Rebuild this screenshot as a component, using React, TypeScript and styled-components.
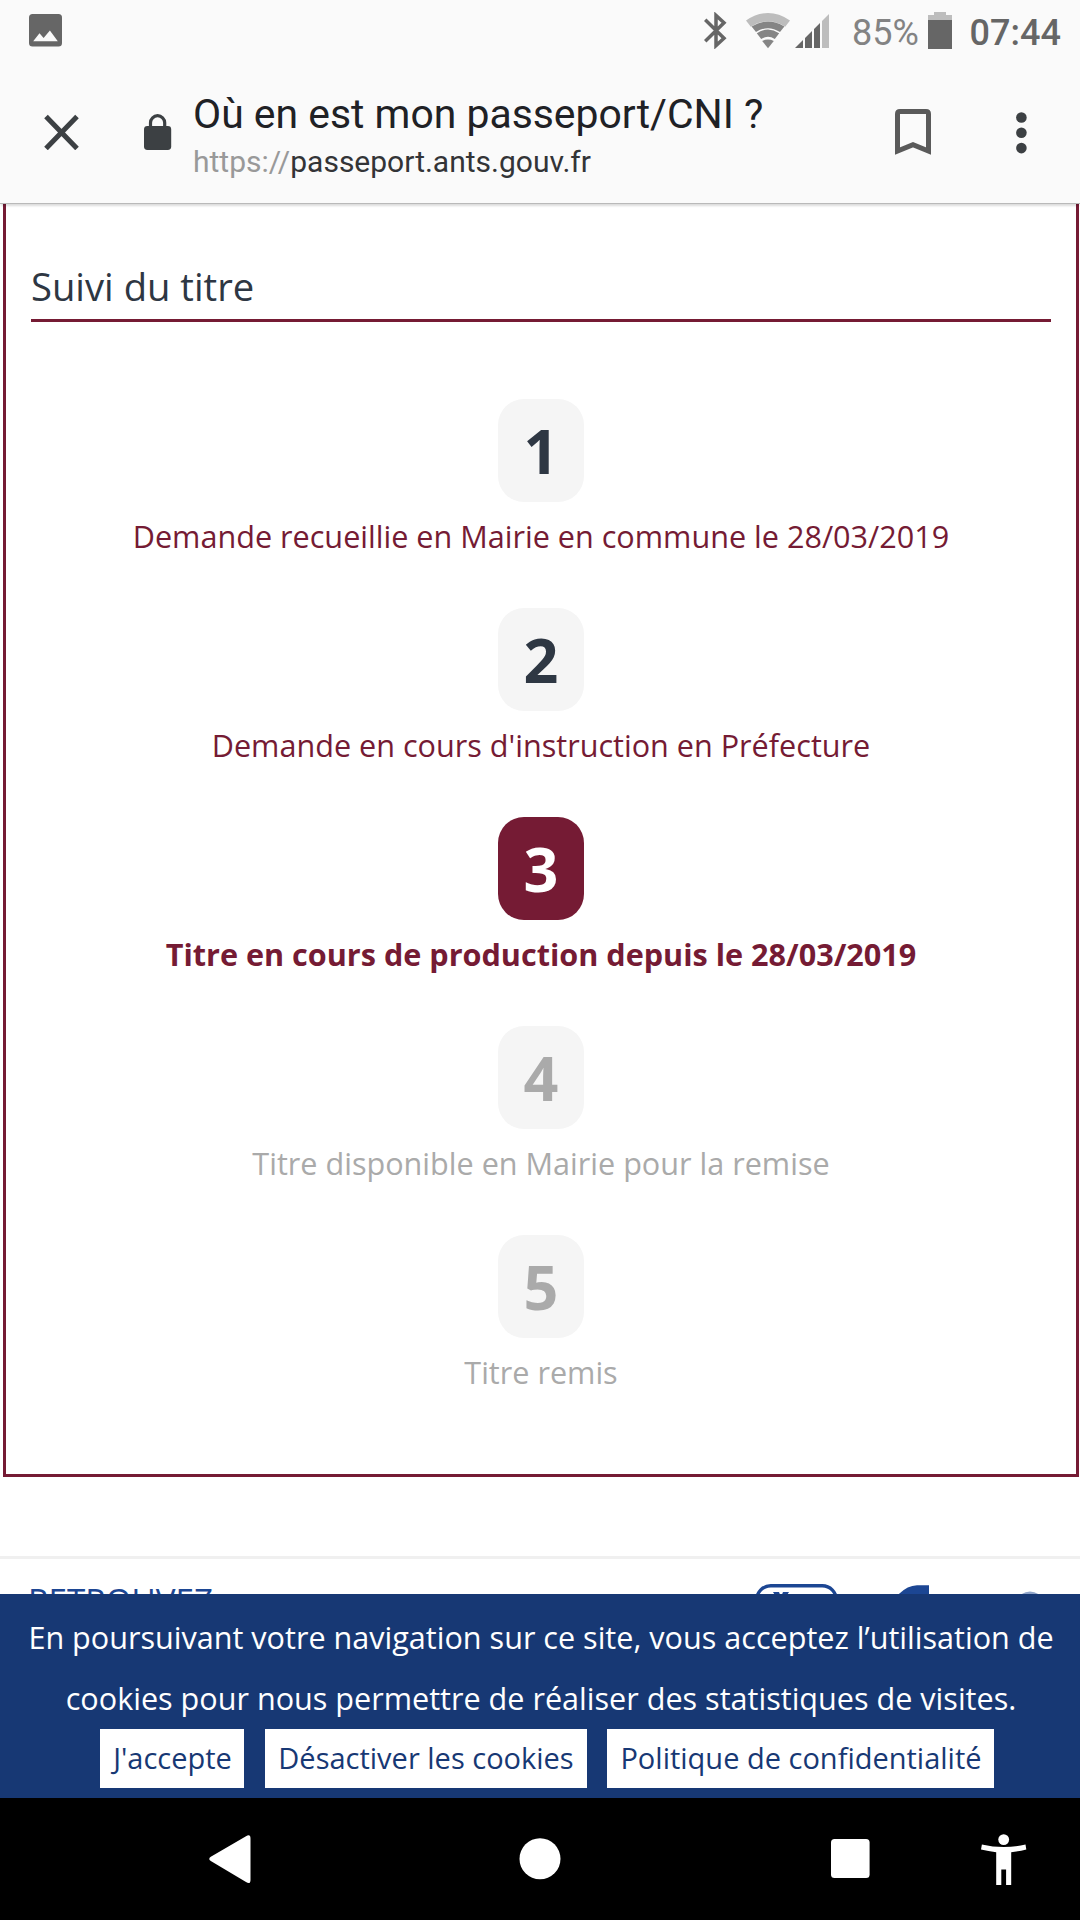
import React from "react";
import styled, { createGlobalStyle } from "styled-components";

const WINE = "#751b34";
const NAVY = "#173874";
const LINK_BLUE = "#1c4693";
const INK = "#2e3743";

const GlobalStyle = createGlobalStyle`
  *, *::before, *::after { box-sizing: border-box; }
  body { margin: 0; background: #fff; }
  svg { display: block; flex: none; }
`;

const Screen = styled.div`
  display: flex;
  flex-direction: column;
  width: 1080px;
  height: 1920px;
  overflow: hidden;
  background: #fff;
  font-family: "Open Sans", "Noto Sans", sans-serif;
`;

/* ---------- Android status bar ---------- */

const StatusBar = styled.div`
  display: flex;
  flex: none;
  align-items: flex-start;
  justify-content: space-between;
  height: 62px;
  padding: 12px 21px 0 29px;
  background: #fafafa;
  font-family: Roboto, sans-serif;
`;

const StatusGroup = styled.div`
  display: flex;
  align-items: flex-start;
`;

const Battery = styled.span`
  width: 64px;
  margin: 0 12px 0 23px;
  font-size: 36px;
  line-height: 42px;
  white-space: nowrap;
  color: #838383;
`;

const Clock = styled.span`
  width: 89.5px;
  margin-left: 17.5px;
  font-size: 36px;
  font-weight: 500;
  line-height: 42px;
  white-space: nowrap;
  color: #666;
`;

/* ---------- Browser toolbar ---------- */

const Toolbar = styled.header`
  position: relative;
  z-index: 1;
  display: flex;
  flex: none;
  align-items: flex-start;
  height: 142px;
  padding: 26px 53px 0 44px;
  border-bottom: 1px solid #b9b9b9;
  background: #fafafa;
  box-shadow: 0 3px 2px -1px rgba(0, 0, 0, 0.14);
  font-family: Roboto, sans-serif;
`;

const ToolIcon = styled.div<{ $top: number; $left?: number }>`
  margin-top: ${(p) => p.$top}px;
  margin-left: ${(p) => p.$left ?? 0}px;
`;

const PageInfo = styled.div`
  display: flex;
  flex: 1;
  flex-direction: column;
  gap: 3px;
  margin: 1px 0 0 21px;
  white-space: nowrap;
`;

const PageTitle = styled.div`
  font-size: 40.9px;
  line-height: 50px;
  color: #202125;
`;

const PageUrl = styled.div`
  font-size: 30px;
  line-height: 40px;
  color: #333437;
`;

const Scheme = styled.span`
  color: #999;
`;

/* ---------- Page content ---------- */

const Content = styled.main`
  flex: none;
  height: 1390px;
  overflow: hidden;
`;

const Card = styled.section`
  height: 1273px;
  margin: 0 1px 0 3px;
  padding: 56px 25px 0;
  border: 3px solid ${WINE};
  border-top: 0;
`;

const CardTitle = styled.h2`
  margin: 0 0 77px;
  padding-bottom: 7px;
  border-bottom: 3px solid ${WINE};
  font-size: 38.2px;
  font-weight: 400;
  line-height: 52px;
  color: ${INK};
`;

const Steps = styled.ol`
  display: flex;
  flex-direction: column;
  gap: 51px;
  margin: 0;
  padding: 0;
  list-style: none;
`;

type StepState = "done" | "current" | "pending";

const Step = styled.li`
  display: flex;
  flex-direction: column;
  align-items: center;
  gap: 13px;
`;

const Badge = styled.div<{ $state: StepState }>`
  width: 86px;
  height: 103px;
  border-radius: 26px;
  background: ${(p) => (p.$state === "current" ? WINE : "#f5f5f5")};
  color: ${(p) => ({ done: INK, current: "#fff", pending: "#aaa" })[p.$state]};
  font-size: 61px;
  font-weight: 700;
  line-height: 103px;
  text-align: center;
`;

const StepLabel = styled.div<{ $state: StepState }>`
  font-size: 30.6px;
  font-weight: ${(p) => (p.$state === "current" ? 700 : 400)};
  line-height: 42px;
  white-space: nowrap;
  color: ${(p) => (p.$state === "pending" ? "#aaa" : WINE)};
`;

const Footer = styled.footer`
  display: flex;
  align-items: flex-start;
  justify-content: space-between;
  height: 60px;
  margin-top: 79px;
  padding: 19px 36px 0 28px;
  border-top: 3px solid #f0f0f0;
`;

const FooterTitle = styled.div`
  margin-top: 2px;
  font-size: 33.2px;
  line-height: 42px;
  color: ${LINK_BLUE};
`;

/* ---------- Cookie banner ---------- */

const CookieBanner = styled.aside`
  display: flex;
  flex: none;
  flex-direction: column;
  align-items: center;
  height: 204px;
  padding-top: 13px;
  background: ${NAVY};
`;

const CookieText = styled.p`
  margin: 0;
  padding-left: 2px;
  font-size: 30.58px;
  line-height: 61px;
  text-align: center;
  white-space: nowrap;
  color: #fff;
`;

const CookieActions = styled.div`
  display: flex;
  gap: 20.5px;
  margin-left: 14px;
`;

const CookieButton = styled.button<{ $width: number }>`
  width: ${(p) => p.$width}px;
  height: 59px;
  padding: 0 0 2px 1px;
  border: 0;
  background: #fff;
  color: ${NAVY};
  font: 400 29px/57px "Open Sans", "Noto Sans", sans-serif;
  white-space: nowrap;
`;

/* ---------- Android navigation bar ---------- */

const NavBar = styled.nav`
  display: flex;
  flex: none;
  align-items: flex-start;
  height: 122px;
  padding: 36px 54px 0 209px;
  background: #000;
`;

const NavItem = styled.div<{ $left?: number; $top?: number }>`
  margin-left: ${(p) => p.$left ?? 0}px;
  margin-top: ${(p) => p.$top ?? 0}px;
`;

const steps: { label: string; state: StepState }[] = [
  { label: "Demande recueillie en Mairie en commune le 28/03/2019", state: "done" },
  { label: "Demande en cours d'instruction en Préfecture", state: "done" },
  { label: "Titre en cours de production depuis le 28/03/2019", state: "current" },
  { label: "Titre disponible en Mairie pour la remise", state: "pending" },
  { label: "Titre remis", state: "pending" },
];

const PictureIcon = () => (
  <svg width="33" height="37" viewBox="0 0 33 37">
    <rect x="0" y="2" width="33" height="32.6" rx="3.5" fill="#666" />
    <path d="M4.2 29.3 L10.5 21.3 L14.6 26 L20.9 18.6 L28.8 29.3 Z" fill="#fafafa" />
  </svg>
);

const BluetoothIcon = () => (
  <svg width="24" height="37" viewBox="0 0 24 37">
    <path
      d="M1.2 7.7 L20 26.3 L12 33.6 V3.4 L20 10.7 L1.2 29.3"
      fill="none"
      stroke="#666"
      strokeWidth="3.5"
    />
  </svg>
);

const WifiIcon = () => (
  <svg width="44" height="37" viewBox="0 0 44 37">
    <path d="M0 8.4 Q22 -6.4 44 8.4 L39.2 14.8 Q22 3.8 4.8 14.8 Z" fill="#bdbdbd" />
    <path d="M5.6 14.4 Q22 4.4 38.4 14.4 L34 20 Q22 12.4 10 20 Z" fill="#858585" />
    <path d="M10.8 21.2 Q22 14 33.2 21.2 L28.8 27 Q22 22.4 15.2 27 Z" fill="#858585" />
    <path d="M16.2 29 Q22 26.2 27.8 29 L22 36.2 Z" fill="#858585" />
  </svg>
);

const SignalIcon = () => (
  <svg width="34" height="37" viewBox="0 0 34 37">
    <path d="M0 36 L8 28 V36 Z M10 26 L17 19 V36 H10 Z M19 17 L25 11 V36 H19 Z" fill="#666" />
    <path d="M27 9 L34 2 V36 H27 Z" fill="#bdbdbd" />
  </svg>
);

const BatteryIcon = () => (
  <svg width="24" height="37" viewBox="0 0 24 37">
    <path d="M6 0 H18 V3 H24 V8 H0 V3 H6 Z" fill="#bdbdbd" />
    <path d="M0 8 H24 V37 H0 Z" fill="#666" />
  </svg>
);

const CloseIcon = () => (
  <svg width="36" height="36" viewBox="0 0 36 36">
    <path d="M2 2.5 L33 34.5 M33 2.5 L2 34.5" stroke="#3c4043" strokeWidth="5" />
  </svg>
);

const LockIcon = () => (
  <svg width="28" height="36" viewBox="0 0 28 36">
    <rect x="0" y="12" width="27.2" height="24" rx="3.4" fill="#3c4043" />
    <path d="M6.5 13 V8.8 A7.1 7.1 0 0 1 20.7 8.8 V13" fill="none" stroke="#3c4043" strokeWidth="3.2" />
  </svg>
);

const BookmarkIcon = () => (
  <svg width="36" height="46" viewBox="0 0 36 46">
    <path
      d="M2.5 42 V5 Q2.5 2.5 5 2.5 H31 Q33.5 2.5 33.5 5 V42 L18 35.6 Z"
      fill="none"
      stroke="#5a5a5a"
      strokeWidth="5"
    />
  </svg>
);

const MoreIcon = () => (
  <svg width="12" height="42" viewBox="0 0 12 42">
    {[5.5, 20.8, 36.1].map((cy) => (
      <circle key={cy} cx="6.4" cy={cy} r="5.3" fill="#3c4043" />
    ))}
  </svg>
);

const SocialIcons = () => (
  <svg width="300" height="40" viewBox="0 0 300 40">
    <rect x="12.7" y="7.8" width="79.6" height="66" rx="14" fill="#fff" stroke={LINK_BLUE} strokeWidth="3.4" />
    <path d="M29 14 H35 L37 19 H32 Z M39 14 H45 L42 19 H37 Z" fill={LINK_BLUE} />
    <path d="M152 19 Q162 7.5 173 7.2 H185 V22 H150 Z" fill={LINK_BLUE} />
    <circle cx="286" cy="28" r="14.5" fill="#8fa4c9" />
  </svg>
);

const BackIcon = () => (
  <svg width="42" height="50" viewBox="0 0 42 50">
    <path
      d="M37 1.2 Q41.5 -1.3 41.5 3.5 V45 Q41.5 49.8 37 47.1 L1.8 26.1 Q-1.3 23.9 1.8 21.7 Z"
      fill="#fff"
    />
  </svg>
);

const AccessibilityIcon = () => (
  <svg width="46" height="52" viewBox="0 0 46 52">
    <circle cx="22.7" cy="5.6" r="5.4" fill="#fff" />
    <path
      d="M.9 10.5 Q22.7 15.5 44.5 10.5 L45.3 15.5 Q38 17.4 30.2 18.2 V51 H25.1 V35.6 H20.3 V51 H15.2 V18.2 Q7.4 17.4 0 15.5 Z"
      fill="#fff"
    />
  </svg>
);

export default function App() {
  return (
    <Screen>
      <GlobalStyle />
      <StatusBar>
        <PictureIcon />
        <StatusGroup>
          <BluetoothIcon />
          <ToolIcon $top={0} $left={18}>
            <WifiIcon />
          </ToolIcon>
          <ToolIcon $top={0} $left={5}>
            <SignalIcon />
          </ToolIcon>
          <Battery>85%</Battery>
          <BatteryIcon />
          <Clock>07:44</Clock>
        </StatusGroup>
      </StatusBar>

      <Toolbar>
        <ToolIcon $top={26}>
          <CloseIcon />
        </ToolIcon>
        <ToolIcon $top={26} $left={64}>
          <LockIcon />
        </ToolIcon>
        <PageInfo>
          <PageTitle>Où en est mon passeport/CNI ?</PageTitle>
          <PageUrl>
            <Scheme>https://</Scheme>passeport.ants.gouv.fr
          </PageUrl>
        </PageInfo>
        <ToolIcon $top={21}>
          <BookmarkIcon />
        </ToolIcon>
        <ToolIcon $top={24} $left={84}>
          <MoreIcon />
        </ToolIcon>
      </Toolbar>

      <Content>
        <Card>
          <CardTitle>Suivi du titre</CardTitle>
          <Steps>
            {steps.map(({ label, state }, i) => (
              <Step key={label}>
                <Badge $state={state}>{i + 1}</Badge>
                <StepLabel $state={state}>{label}</StepLabel>
              </Step>
            ))}
          </Steps>
        </Card>
        <Footer>
          <FooterTitle>RETROUVEZ</FooterTitle>
          <SocialIcons />
        </Footer>
      </Content>

      <CookieBanner>
        <CookieText>
          En poursuivant votre navigation sur ce site, vous acceptez l’utilisation de
          <br />
          cookies pour nous permettre de réaliser des statistiques de visites.
        </CookieText>
        <CookieActions>
          <CookieButton $width={144}>J'accepte</CookieButton>
          <CookieButton $width={322}>Désactiver les cookies</CookieButton>
          <CookieButton $width={387}>Politique de confidentialité</CookieButton>
        </CookieActions>
      </CookieBanner>

      <NavBar>
        <NavItem $top={1}>
          <BackIcon />
        </NavItem>
        <NavItem $left={268} $top={4}>
          <svg width="42" height="42" viewBox="0 0 42 42">
            <circle cx="21" cy="20.8" r="20.5" fill="#fff" />
          </svg>
        </NavItem>
        <NavItem $left={270} $top={5}>
          <svg width="39" height="39" viewBox="0 0 39 39">
            <rect width="38.6" height="39" rx="3.5" fill="#fff" />
          </svg>
        </NavItem>
        <NavItem $left={111}>
          <AccessibilityIcon />
        </NavItem>
      </NavBar>
    </Screen>
  );
}
